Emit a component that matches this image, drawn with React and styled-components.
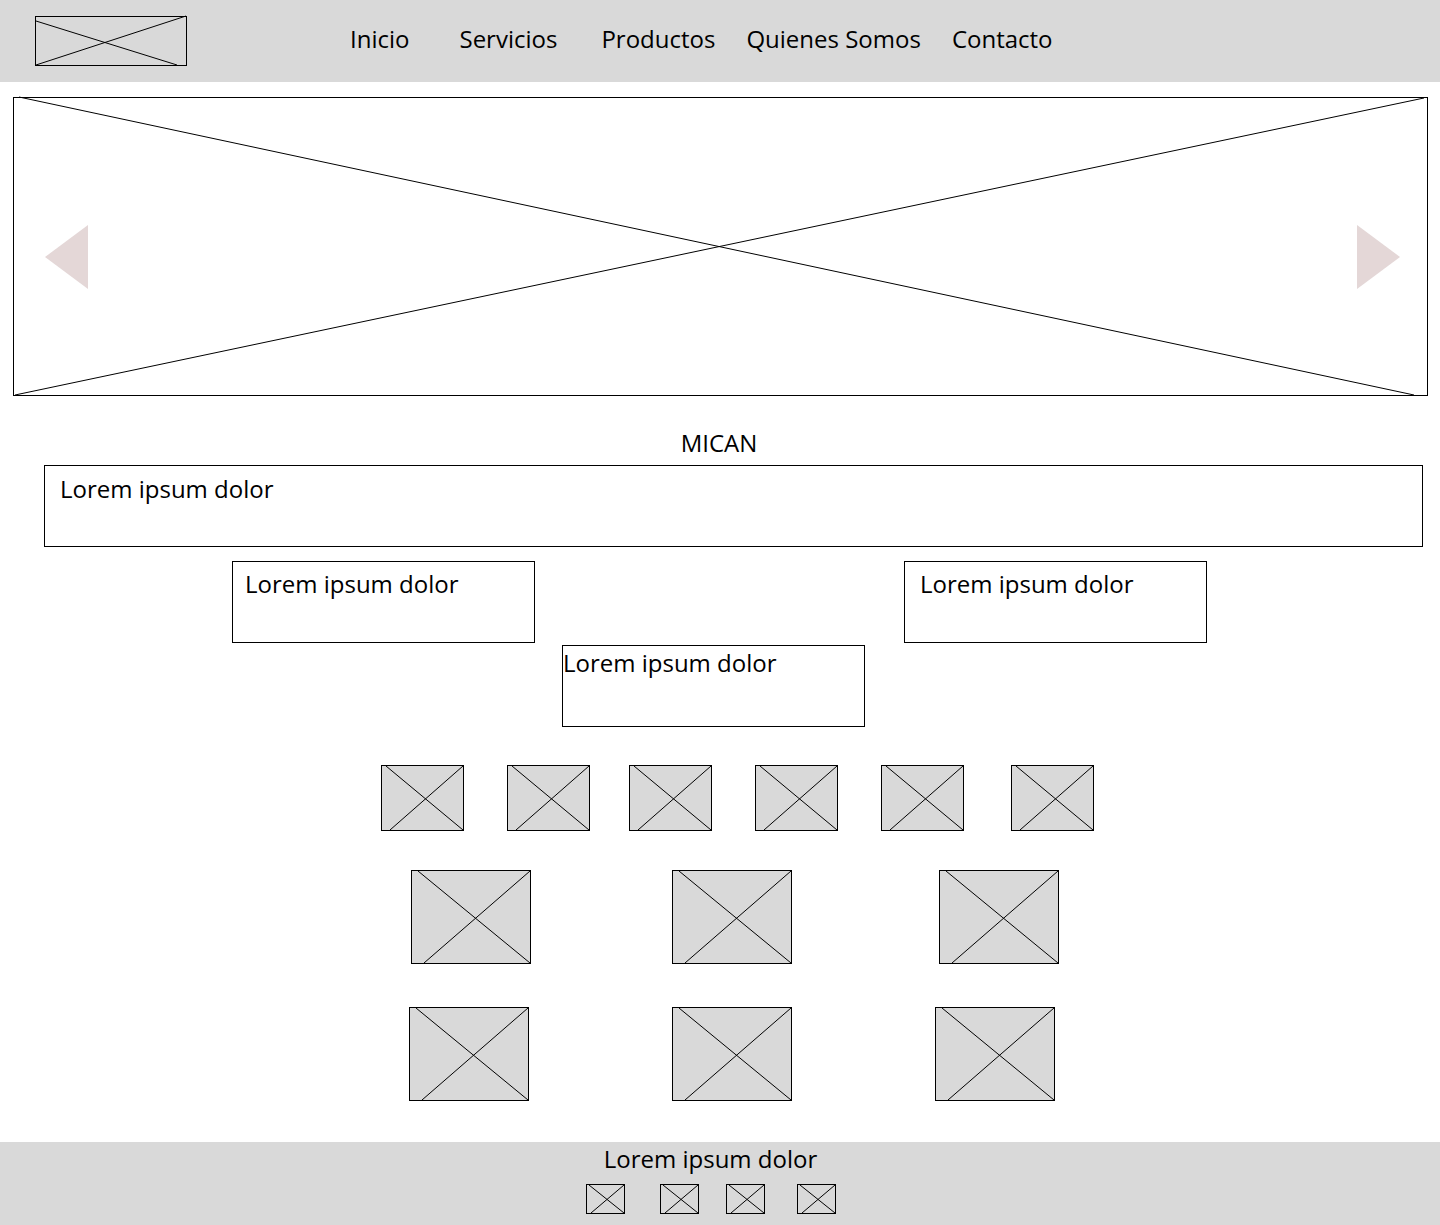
import React from 'react';
import styled, { createGlobalStyle } from 'styled-components';

const GlobalStyle = createGlobalStyle`
  html, body {
    margin: 0;
    padding: 0;
    background: #fff;
  }
  body {
    font-family: "Open Sans", "Liberation Sans", sans-serif;
    color: #000;
  }
  * {
    box-sizing: border-box;
  }
`;

const Page = styled.div`
  width: 1440px;
  height: 1225px;
  display: flex;
  flex-direction: column;
  overflow: hidden;
`;

const Header = styled.header`
  height: 82px;
  flex: none;
  background: #d9d9d9;
  display: flex;
  align-items: center;
  padding-left: 35px;
`;

const Nav = styled.nav`
  display: flex;
  align-items: center;
  margin-left: 163px;
  padding-bottom: 6px;
`;

const NavItem = styled.a`
  font-size: 24px;
  line-height: 33px;
  color: #000;
  text-decoration: none;
  margin-left: ${({ $offset }) => $offset}px;
`;

const Box = styled.div`
  position: relative;
  flex: none;
  width: ${({ $w }) => $w}px;
  height: ${({ $h }) => $h}px;
  border: 1px solid #000;
  background: ${({ $fill }) => $fill || 'transparent'};
  margin-left: ${({ $offset }) => $offset || 0}px;
`;

const Cross = styled.svg`
  display: block;
  width: 100%;
  height: 100%;
  overflow: visible;
`;

const Placeholder = ({ w, h, fill, offset, lines, children }) => {
  const iw = w - 2;
  const ih = h - 2;
  const l = lines || [
    [Math.round(iw * 0.05), 0, iw, ih],
    [Math.round(iw * 0.1), ih, iw, 0]
  ];
  return (
    <Box $w={w} $h={h} $fill={fill} $offset={offset}>
      <Cross viewBox={`0 0 ${iw} ${ih}`} preserveAspectRatio="none">
        {l.map(([x1, y1, x2, y2], i) => (
          <line key={i} x1={x1} y1={y1} x2={x2} y2={y2} stroke="#000" strokeWidth="1" />
        ))}
      </Cross>
      {children}
    </Box>
  );
};

const Hero = styled.section`
  margin: 15px 0 0 13px;
`;

const Arrow = styled.span`
  position: absolute;
  top: 127px;
  width: 0;
  height: 0;
  border-top: 32px solid transparent;
  border-bottom: 32px solid transparent;
  ${({ $dir }) =>
    $dir === 'left'
      ? 'left: 31px; border-right: 43px solid #e4d7d7;'
      : 'right: 27px; border-left: 43px solid #e4d7d7;'}
`;

const Title = styled.h2`
  margin: 30px 0 0;
  padding-right: 2px;
  font-size: 24px;
  line-height: 33px;
  font-weight: 400;
  text-align: center;
`;

const TextBox = styled.div`
  flex: none;
  width: ${({ $w }) => $w}px;
  height: 82px;
  border: 1px solid #000;
  margin-left: ${({ $offset }) => $offset}px;
  margin-top: ${({ $top }) => $top || 0}px;
  padding: ${({ $pt }) => $pt}px 0 0 ${({ $pl }) => $pl}px;
  font-size: 24px;
  line-height: 33px;
`;

const Row = styled.div`
  display: flex;
  align-items: flex-start;
  margin-top: ${({ $top }) => $top}px;
`;

const Footer = styled.footer`
  margin-top: auto;
  height: 83px;
  flex: none;
  background: #d9d9d9;
  display: flex;
  flex-direction: column;
  align-items: center;
  padding-right: 21px;
`;

const FooterText = styled.p`
  margin: 0;
  font-size: 24px;
  line-height: 33px;
  padding-left: 2px;
`;

const SocialRow = styled.div`
  display: flex;
  margin-top: 9px;
  padding-left: 2px;
`;

const thumbs = [381, 43, 39, 43, 43, 47];
const cardsA = [411, 141, 147];
const cardsB = [409, 143, 143];
const social = [0, 35, 27, 32];
const nav = [
  ['Inicio', 0],
  ['Servicios', 50],
  ['Productos', 44],
  ['Quienes Somos', 31],
  ['Contacto', 31]
];

const App = () => (
  <Page>
    <GlobalStyle />
    <Header>
      <Placeholder
        w={152}
        h={50}
        lines={[
          [0, 4, 141, 48],
          [0, 48, 150, -1]
        ]}
      />
      <Nav>
        {nav.map(([label, offset]) => (
          <NavItem key={label} href="#" $offset={offset}>
            {label}
          </NavItem>
        ))}
      </Nav>
    </Header>

    <Hero>
      <Placeholder
        w={1415}
        h={299}
        fill="#fff"
        lines={[
          [5, -1, 1400, 297],
          [1, 297, 1410, 0]
        ]}
      >
        <Arrow $dir="left" />
        <Arrow $dir="right" />
      </Placeholder>
    </Hero>

    <Title>MICAN</Title>
    <TextBox $w={1379} $offset={44} $top={6} $pt={6} $pl={15}>
      Lorem ipsum dolor
    </TextBox>

    <Row $top={14}>
      <TextBox $w={303} $offset={232} $pt={5} $pl={12}>
        Lorem ipsum dolor
      </TextBox>
      <TextBox $w={303} $offset={369} $pt={5} $pl={15}>
        Lorem ipsum dolor
      </TextBox>
    </Row>
    <Row $top={2}>
      <TextBox $w={303} $offset={562} $pt={0} $pl={0}>
        Lorem ipsum dolor
      </TextBox>
    </Row>

    <Row $top={38}>
      {thumbs.map((offset, i) => (
        <Placeholder key={i} w={83} h={66} fill="#d9d9d9" offset={offset} />
      ))}
    </Row>
    <Row $top={39}>
      {cardsA.map((offset, i) => (
        <Placeholder key={i} w={120} h={94} fill="#d9d9d9" offset={offset} />
      ))}
    </Row>
    <Row $top={43}>
      {cardsB.map((offset, i) => (
        <Placeholder key={i} w={120} h={94} fill="#d9d9d9" offset={offset} />
      ))}
    </Row>

    <Footer>
      <FooterText>Lorem ipsum dolor</FooterText>
      <SocialRow>
        {social.map((offset, i) => (
          <Placeholder key={i} w={39} h={30} offset={offset} />
        ))}
      </SocialRow>
    </Footer>
  </Page>
);

export default App;
